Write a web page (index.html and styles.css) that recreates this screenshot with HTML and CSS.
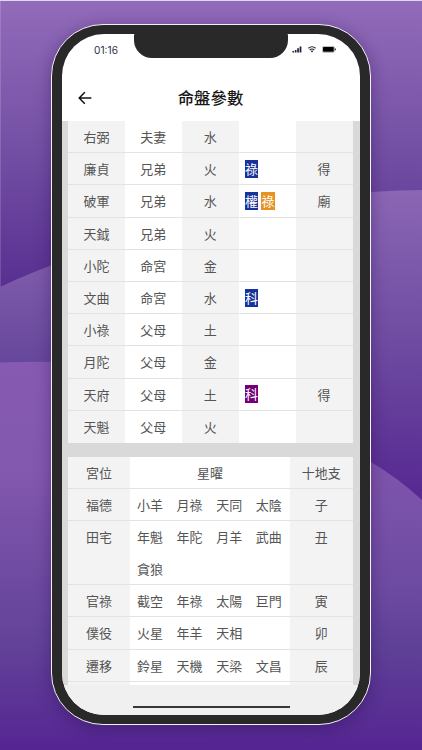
FILE: index.html
```
<!DOCTYPE html>
<html lang="zh-Hant">
<head>
<meta charset="utf-8">
<title>命盤參數</title>
<link rel="stylesheet" href="styles.css">
</head>
<body>
<svg class="backdrop" viewBox="0 0 422 750" preserveAspectRatio="none" aria-hidden="true">
  <defs>
    <linearGradient id="g1" gradientUnits="userSpaceOnUse" x1="0" y1="0" x2="0" y2="285"><stop offset="0" stop-color="#926bba"/><stop offset=".5" stop-color="#7551a5"/><stop offset="1" stop-color="#583091"/></linearGradient>
    <linearGradient id="g2" gradientUnits="userSpaceOnUse" x1="0" y1="265" x2="0" y2="362"><stop offset="0" stop-color="#7f5bab"/><stop offset="1" stop-color="#66479b"/></linearGradient>
    <linearGradient id="g3" gradientUnits="userSpaceOnUse" x1="0" y1="362" x2="0" y2="750"><stop offset="0" stop-color="#865ab1"/><stop offset=".28" stop-color="#8258ae"/><stop offset=".72" stop-color="#634399"/><stop offset="1" stop-color="#552592"/></linearGradient>
    <linearGradient id="g4" gradientUnits="userSpaceOnUse" x1="0" y1="190" x2="0" y2="490"><stop offset="0" stop-color="#8b66b5"/><stop offset=".5" stop-color="#6f4ca1"/><stop offset="1" stop-color="#572a92"/></linearGradient>
    <linearGradient id="g5" gradientUnits="userSpaceOnUse" x1="0" y1="462" x2="0" y2="750"><stop offset="0" stop-color="#7f55ac"/><stop offset=".42" stop-color="#6e4ba2"/><stop offset=".65" stop-color="#5f4097"/><stop offset="1" stop-color="#552592"/></linearGradient>
  </defs>
  <path fill="url(#g1)" d="M0 0H422V750H0z"/>
  <path fill="url(#g2)" d="M0 287Q25 275 60 262V370H0z"/>
  <path fill="url(#g3)" d="M0 362.5Q25 361.5 60 362H211V750H0z"/>
  <path fill="url(#g4)" d="M211 200L371 192Q400 190 422 190V750H211z"/>
  <path fill="url(#g5)" d="M211 462H371Q398 478 422 500V750H211z"/>
  <path fill="#e2d4f3" d="M0 0H422V1H0z"/>
  <path fill="#fff" fill-opacity=".15" d="M0 1H1V287H0z"/>
</svg>
<main class="phone">
  <div class="screen">
    <div class="notch"></div>
    <div class="status">
      <span>01:16</span>
      <div class="status-icons">
        <svg width="10" height="7" viewBox="0 0 10 7"><path fill="#22203c" d="M.4 5H2v1.5H.4zM2.8 4h1.7v2.5H2.8zM5.2 2.3h1.7v4.2H5.2zM7.6.4h1.8v6.1H7.6z"/></svg>
        <svg width="8" height="7" viewBox="0 0 8 7" fill="none" stroke="#22203c" stroke-width="1.2"><path d="M.4 2.3Q4-.8 7.6 2.3M1.7 4Q4 2 6.3 4"/><path fill="#22203c" stroke="none" d="M2.7 4.9Q4 4 5.3 4.9L4 6.4z"/></svg>
        <svg width="14" height="7" viewBox="0 0 14 7"><rect x=".4" y=".4" width="12" height="6" rx="1.4" fill="none" stroke="#888" stroke-width=".6"/><rect x="1" y="1" width="10.8" height="4.8" rx=".8"/><path d="M12.8 2.2q1 .1 1 1.2t-1 1.2z"/></svg>
      </div>
    </div>
    <header class="bar">
      <svg class="back" width="14" height="14" viewBox="0 0 14 14" fill="none" stroke="#111" stroke-width="1.5"><path d="M13.3 7H1.2M6.8 1.2L1.2 7l5.6 5.8"/></svg>
      <h1>命盤參數</h1>
    </header>
    <div class="content">
      <section class="table stars">
        <div class="row"><b>右弼</b><b>夫妻</b><b>水</b><b></b><b></b></div>
        <div class="row"><b>廉貞</b><b>兄弟</b><b>火</b><b><i>祿</i></b><b>得</b></div>
        <div class="row"><b>破軍</b><b>兄弟</b><b>水</b><b><i>權</i><i class="orange">祿</i></b><b>廟</b></div>
        <div class="row"><b>天鉞</b><b>兄弟</b><b>火</b><b></b><b></b></div>
        <div class="row"><b>小陀</b><b>命宮</b><b>金</b><b></b><b></b></div>
        <div class="row"><b>文曲</b><b>命宮</b><b>水</b><b><i>科</i></b><b></b></div>
        <div class="row"><b>小祿</b><b>父母</b><b>土</b><b></b><b></b></div>
        <div class="row"><b>月陀</b><b>父母</b><b>金</b><b></b><b></b></div>
        <div class="row"><b>天府</b><b>父母</b><b>土</b><b><i class="purple">科</i></b><b>得</b></div>
        <div class="row"><b>天魁</b><b>父母</b><b>火</b><b></b><b></b></div>
      </section>
      <section class="table palaces">
        <div class="row"><b>宮位</b><b>星曜</b><b>十地支</b></div>
        <div class="row"><b>福德</b><div class="names"><span>小羊</span><span>月祿</span><span>天同</span><span>太陰</span></div><b>子</b></div>
        <div class="row tall"><b>田宅</b><div class="names"><span>年魁</span><span>年陀</span><span>月羊</span><span>武曲</span><span>貪狼</span></div><b>丑</b></div>
        <div class="row"><b>官祿</b><div class="names"><span>截空</span><span>年祿</span><span>太陽</span><span>巨門</span></div><b>寅</b></div>
        <div class="row"><b>僕役</b><div class="names"><span>火星</span><span>年羊</span><span>天相</span></div><b>卯</b></div>
        <div class="row"><b>遷移</b><div class="names"><span>鈴星</span><span>天機</span><span>天梁</span><span>文昌</span></div><b>辰</b></div>
        <div class="row"><b></b><div class="names"></div><b></b></div>
      </section>
    </div>
    <footer class="home"><div class="home-line"></div></footer>
  </div>
</main>
</body>
</html>
```
FILE: styles.css
```
* { box-sizing: border-box; }
body {
  margin: 0;
  width: 422px;
  height: 750px;
  overflow: hidden;
  padding: 24px 0 0 51px;
  font-family: "Noto Sans CJK TC", sans-serif;
  color: #555;
}
.backdrop { position: absolute; inset: 0; width: 422px; height: 750px; z-index: -1; }
.phone {
  width: 320px;
  height: 701px;
  padding: 9px 10px;
  background: #292929;
  border: 1px solid #f6effb;
  border-radius: 52px;
  box-shadow: 0 3px 16px rgba(35, 10, 70, .38);
}
.screen {
  position: relative;
  display: flex;
  flex-direction: column;
  height: 681px;
  background: #fff;
  border-radius: 42px;
  overflow: hidden;
}
.notch {
  position: absolute;
  top: 0;
  left: 72px;
  width: 154px;
  height: 24px;
  background: #292929;
  border-radius: 1px 1px 18px 18px;
}
.status {
  flex: none;
  display: flex;
  justify-content: space-between;
  height: 36px;
  padding: 9px 24px 0 32px;
  font: 10.2px/14px Inter, sans-serif;
  color: #333047;
}
.status-icons { display: flex; gap: 6px; padding-top: 3.4px; }
.bar {
  flex: none;
  display: grid;
  grid-template-columns: 1fr auto 1fr;
  align-items: center;
  height: 51px;
  padding: 4px 17px 0 16px;
}
.bar h1 { margin: -2px 0 0; font-size: 16.4px; line-height: 24px; font-weight: 500; color: #171717; }
.content {
  flex: 1;
  min-height: 0;
  overflow: hidden;
  padding: 0 7.5px 0 6px;
  background: #d9d9d9;
}
.table { background: #fff; }
.palaces { margin-top: 14px; }
.row { display: grid; grid-template-rows: 100%; height: 32.2px; border-bottom: 1px solid #e3e3e3; }
.row.tall { height: 64px; }
.stars .row { grid-template-columns: repeat(5, 1fr); }
.stars .row:last-child { border: 0; }
.palaces .row { grid-template-columns: 62px minmax(0, 1fr) 62.5px; }
.row > b {
  font-size: 13px;
  line-height: 31px;
  font-weight: 400;
  text-align: center;
}
.row > b:nth-child(odd) { background: #f3f3f3; }
.stars .row > b:nth-child(4) { display: flex; align-items: center; gap: 3px; padding-left: 6px; }
i {
  width: 13.5px;
  height: 18px;
  font-style: normal;
  font-size: 13px;
  line-height: 18px;
  color: #fff;
  background: #17339b;
}
i.orange { background: #e6921f; }
i.purple { background: #730078; }
.names {
  display: grid;
  grid-template-columns: repeat(4, 39.6px);
  align-content: start;
  padding-left: 7px;
  font-size: 13px;
  line-height: 31px;
}
.tall .names { row-gap: 1px; }
.home { flex: none; height: 30px; padding-top: 21px; background: #f0f0f0; }
.home-line { width: 157px; height: 2px; margin: 0 auto; background: #383838; }
```
